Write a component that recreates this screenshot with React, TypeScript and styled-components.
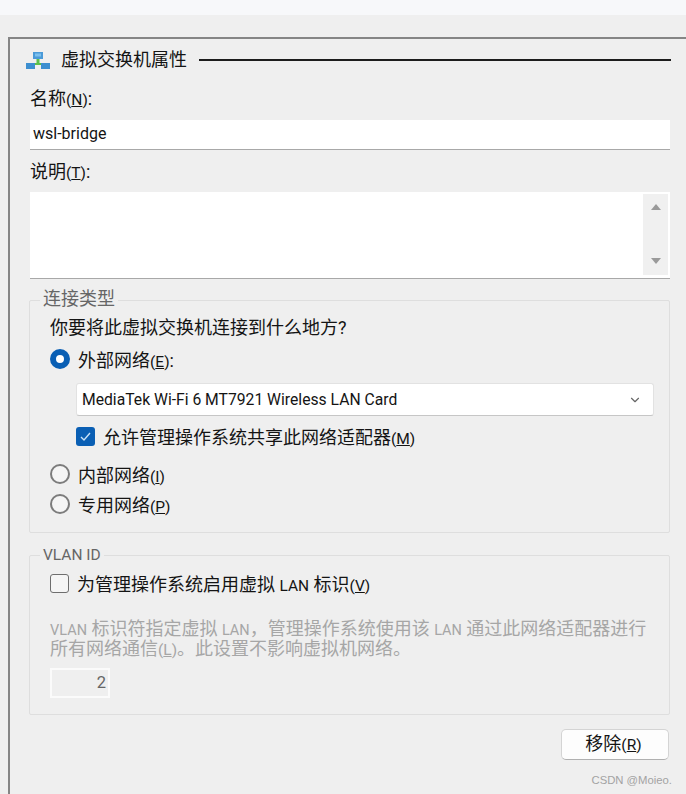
import React from 'react';
import styled, { createGlobalStyle } from 'styled-components';
import { ChevronDown } from 'lucide-react';

const GlobalStyle = createGlobalStyle`
  html, body {
    margin: 0;
    padding: 0;
    background: #efefef;
  }
  * {
    box-sizing: border-box;
  }
  body {
    font-family: Roboto, "Noto Sans CJK SC", sans-serif;
    font-size: 18px;
    color: #141414;
  }
`;

const Page = styled.div`
  width: 686px;
  height: 794px;
  overflow: hidden;
  position: relative;
  background: #efefef;
`;

const TopBand = styled.div`
  height: 15px;
  background: #f7f8fa;
`;

const Window = styled.div`
  margin: 22px 0 0 8px;
  height: 757px;
  border-top: 2px solid #858585;
  border-left: 2px solid #858585;
  padding: 10px 16px 0 20px;
`;

const TitleRow = styled.div`
  display: flex;
  align-items: center;
  height: 22px;
  gap: 11px;
  margin-left: -4px;
`;

const TitleText = styled.span`
  font-size: 18px;
  line-height: 22px;
  white-space: nowrap;
`;

const TitleLine = styled.div`
  flex: 1;
  height: 2px;
  background: #1c1c1c;
  margin-left: 1px;
  margin-right: -1px;
`;

const FieldLabel = styled.div<{ $top: number }>`
  margin-top: ${(p) => p.$top}px;
  height: 24px;
  line-height: 24px;
`;

// latin runs sit narrower next to the CJK text
const Latin = styled.span`
  font-size: 15.5px;
  line-height: 1;
`;

const NoteLatin = styled(Latin)`
  font-size: 14.5px;
`;

const TextField = styled.div`
  height: 30px;
  margin-top: 9px;
  background: #fff;
  border-bottom: 1px solid #a8a8a8;
  padding-left: 3px;
  font-size: 16px;
  line-height: 27px;
`;

const MemoField = styled.div`
  height: 87px;
  margin-top: 8px;
  background: #fff;
  border-bottom: 1px solid #a8a8a8;
  padding: 2px 2px 3px 0;
  display: flex;
  justify-content: flex-end;
`;

const ScrollTrack = styled.div`
  width: 25px;
  background: #f0f0f0;
  display: flex;
  flex-direction: column;
  justify-content: space-between;
  align-items: center;
  padding: 10px 0 11px;
`;

const Arrow = styled.div<{ $down?: boolean }>`
  width: 0;
  height: 0;
  border-left: 5px solid transparent;
  border-right: 5px solid transparent;
  ${(p) =>
    p.$down
      ? 'border-top: 6px solid #9a9a9a;'
      : 'border-bottom: 6px solid #9a9a9a;'}
`;

const Group = styled.fieldset<{ $height: number; $top: number }>`
  margin: ${(p) => p.$top}px 0 0 -1px;
  width: 641px;
  min-width: 0;
  height: ${(p) => p.$height}px;
  padding: 0 20px;
  border: 1px solid #dedede;
  border-radius: 2px;
  position: relative;
`;

const GroupLegend = styled.legend`
  position: absolute;
  top: -12px;
  left: 10px;
  padding: 0 3px;
  height: 20px;
  line-height: 20px;
  font-size: 18px;
  color: #666;
  background: #efefef;
`;

const Question = styled.div`
  margin-top: 15px;
  height: 24px;
  line-height: 24px;
`;

const RadioRow = styled.div<{ $top: number }>`
  display: flex;
  align-items: center;
  gap: 8px;
  height: 24px;
  margin-top: ${(p) => p.$top}px;
`;

const Radio = styled.span<{ $checked?: boolean }>`
  width: 20px;
  height: 20px;
  border-radius: 50%;
  flex-shrink: 0;
  ${(p) =>
    p.$checked
      ? 'background: #fff; border: 6px solid #0a5fb4;'
      : 'background: #f5f5f5; border: 2px solid #7c7c7c;'}
`;

const Combo = styled.div`
  margin: 12px 0 0 26px;
  width: 578px;
  height: 33px;
  background: #fff;
  border: 1px solid #e2e2e2;
  border-bottom-color: #c6c6c6;
  border-radius: 3px;
  display: flex;
  align-items: center;
  justify-content: space-between;
  padding: 0 11px 0 5px;
  font-size: 15.7px;
`;

const CheckRow = styled.div<{ $left: number; $top: number }>`
  display: flex;
  align-items: center;
  gap: 8px;
  height: 24px;
  margin: ${(p) => p.$top}px 0 0 ${(p) => p.$left}px;
`;

const CheckBox = styled.span<{ $checked?: boolean }>`
  width: 19px;
  height: 19px;
  border-radius: 3px;
  flex-shrink: 0;
  display: flex;
  align-items: center;
  justify-content: center;
  ${(p) =>
    p.$checked
      ? 'background: #0a5fb4;'
      : 'background: #f5f5f5; border: 1px solid #6e6e6e;'}
`;

const DisabledNote = styled.div`
  margin-top: 24px;
  line-height: 19px;
  color: #a6a6a6;
  white-space: nowrap;
`;

const SpinField = styled.div`
  margin-top: 10px;
  width: 60px;
  height: 30px;
  border: 2px solid #fbfbfb;
  color: #666;
  font-size: 16.5px;
  line-height: 26px;
  text-align: right;
  padding-right: 2px;
`;

const ButtonRow = styled.div`
  display: flex;
  justify-content: flex-end;
  margin-top: 14px;
  margin-right: 1px;
`;

const Button = styled.button`
  width: 108px;
  height: 31px;
  background: #fdfdfd;
  border: 1px solid #d4d4d4;
  border-bottom-color: #b0b0b0;
  border-radius: 5px;
  font: inherit;
  line-height: 26px;
  color: #141414;
  padding: 0 3px 2px 0;
`;

const Watermark = styled.div`
  position: absolute;
  right: 14px;
  bottom: 7px;
  font-family: "Liberation Sans", sans-serif;
  font-size: 11.3px;
  line-height: 14px;
  color: #a3a3a3;
`;

function SwitchIcon() {
  return (
    <svg width="24" height="17" viewBox="0 0 24 17">
      <rect x="7" y="0" width="10" height="7" fill="#4a9ad8" />
      <rect x="9" y="1.5" width="6" height="3" fill="#7cc0ee" />
      <rect x="10.5" y="7" width="3" height="5" fill="#5cc04a" />
      <rect x="5" y="11" width="14" height="2" fill="#5cc04a" />
      <rect x="0" y="11" width="9" height="6" fill="#3d8fd0" />
      <rect x="15" y="11" width="9" height="6" fill="#3d8fd0" />
    </svg>
  );
}

function Key({ char }: { char: string }) {
  return (
    <Latin>
      (<u>{char}</u>)
    </Latin>
  );
}

export default function App() {
  return (
    <Page>
      <GlobalStyle />
      <TopBand />
      <Window>
        <TitleRow>
          <SwitchIcon />
          <TitleText>虚拟交换机属性</TitleText>
          <TitleLine />
        </TitleRow>
        <FieldLabel $top={16}>
          名称<Key char="N" />:
        </FieldLabel>
        <TextField>wsl-bridge</TextField>
        <FieldLabel $top={10}>
          说明<Key char="T" />:
        </FieldLabel>
        <MemoField>
          <ScrollTrack>
            <Arrow />
            <Arrow $down />
          </ScrollTrack>
        </MemoField>
        <Group $top={21} $height={233}>
          <GroupLegend>连接类型</GroupLegend>
          <Question>你要将此虚拟交换机连接到什么地方?</Question>
          <RadioRow $top={7}>
            <Radio $checked />
            <span>
              外部网络<Key char="E" />:
            </span>
          </RadioRow>
          <Combo>
            MediaTek Wi-Fi 6 MT7921 Wireless LAN Card
            <ChevronDown size={14} color="#666" />
          </Combo>
          <CheckRow $left={26} $top={8}>
            <CheckBox $checked>
              <svg width="13" height="13" viewBox="0 0 13 13">
                <path d="M2 7l3 3 6-7" fill="none" stroke="#c9e2f7" strokeWidth="1.4" />
              </svg>
            </CheckBox>
            <span>
              允许管理操作系统共享此网络适配器<Key char="M" />
            </span>
          </CheckRow>
          <RadioRow $top={14}>
            <Radio />
            <span>
              内部网络<Key char="I" />
            </span>
          </RadioRow>
          <RadioRow $top={6}>
            <Radio />
            <span>
              专用网络<Key char="P" />
            </span>
          </RadioRow>
        </Group>
        <Group $top={22} $height={160}>
          <GroupLegend>
            <Latin>VLAN ID</Latin>
          </GroupLegend>
          <CheckRow $left={0} $top={15}>
            <CheckBox />
            <span>
              为管理操作系统启用虚拟 <Latin>LAN</Latin> 标识<Key char="V" />
            </span>
          </CheckRow>
          <DisabledNote>
            <NoteLatin>VLAN</NoteLatin> 标识符指定虚拟 <NoteLatin>LAN</NoteLatin>，管理操作系统使用该 <NoteLatin>LAN</NoteLatin> 通过此网络适配器进行
            <br />
            所有网络通信<Key char="L" />。此设置不影响虚拟机网络。
          </DisabledNote>
          <SpinField>2</SpinField>
        </Group>
        <ButtonRow>
          <Button>
            移除<Key char="R" />
          </Button>
        </ButtonRow>
      </Window>
      <Watermark>CSDN @Moieo.</Watermark>
    </Page>
  );
}
